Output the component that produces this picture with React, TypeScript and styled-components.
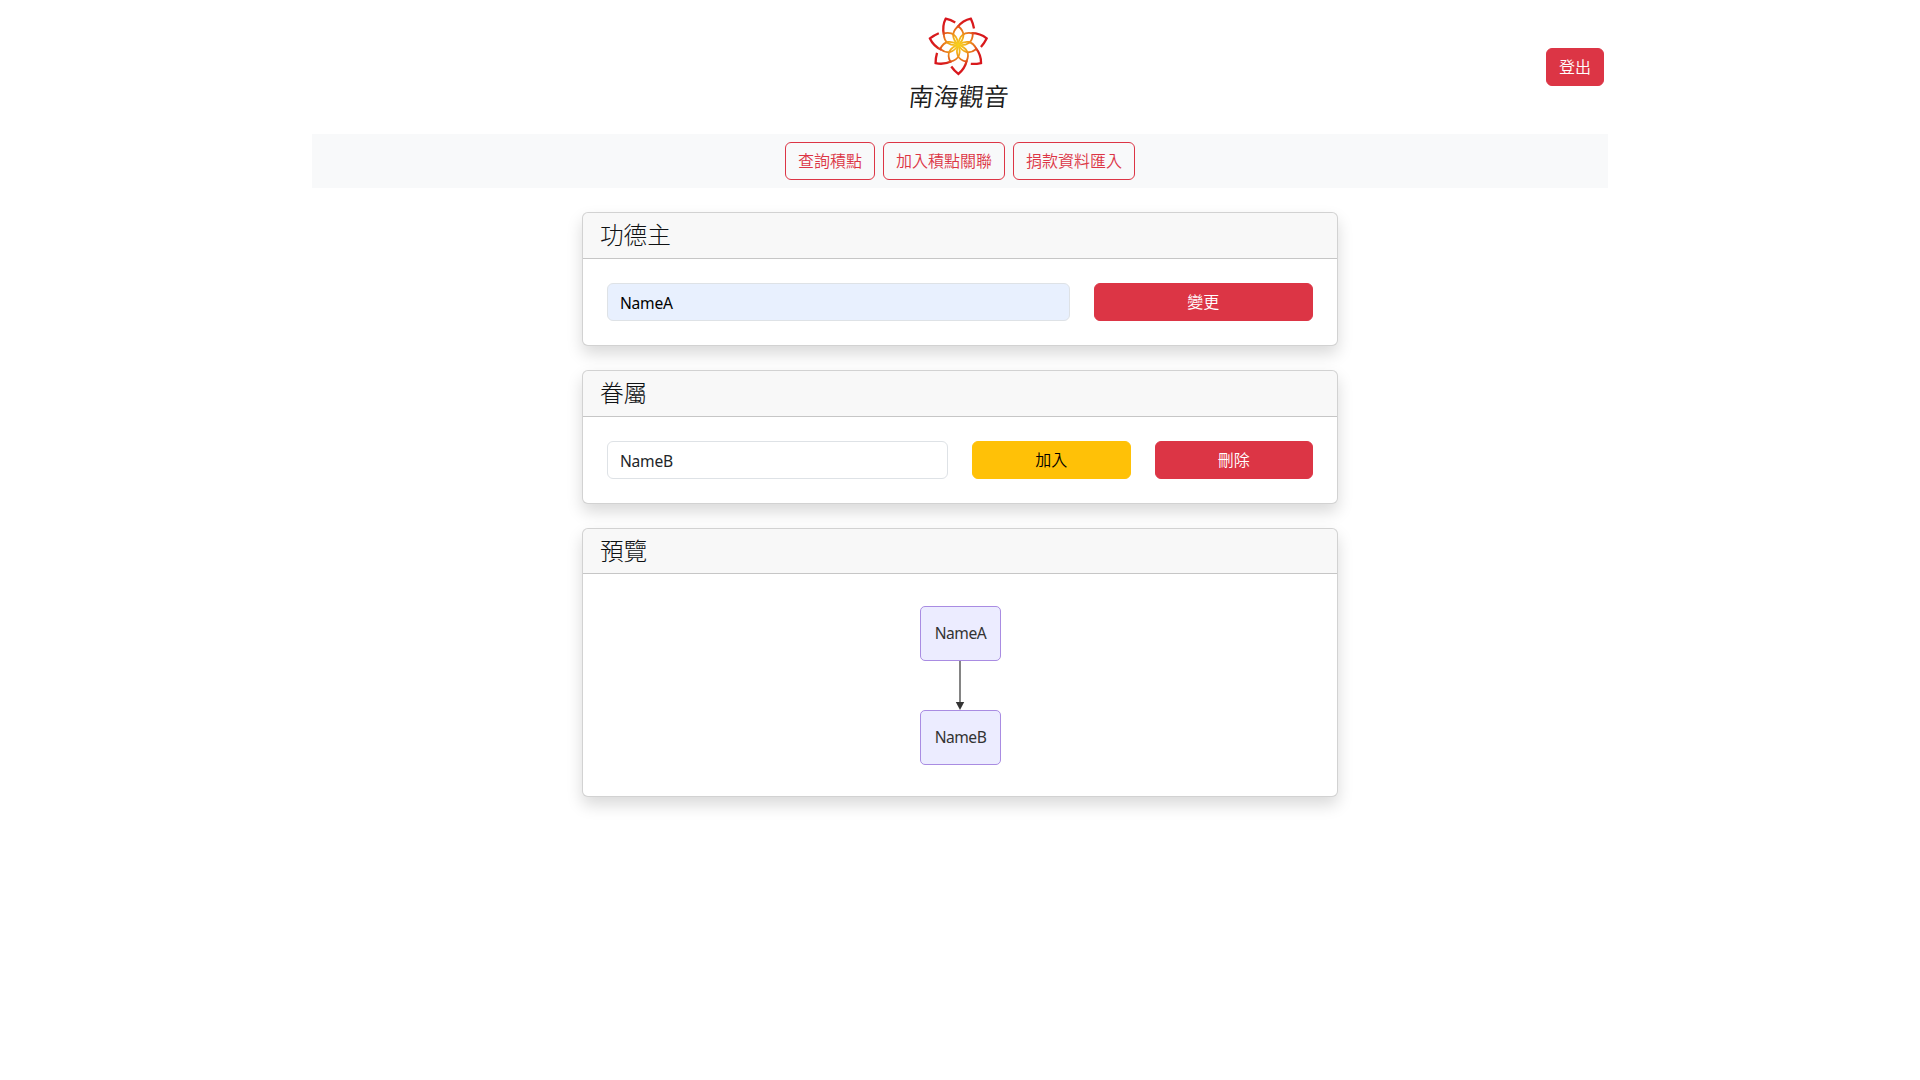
import React, { useState } from "react";
import styled, { createGlobalStyle, css } from "styled-components";

const GlobalStyle = createGlobalStyle`
  *, *::before, *::after { box-sizing: border-box; }
  body {
    margin: 0;
    background: #fff;
    color: #212529;
    font-family: "Noto Sans", "Noto Sans CJK TC", sans-serif;
    font-size: 16px;
    line-height: 1.5;
  }
`;

const Container = styled.div`
  width: 1296px;
  min-height: 100vh;
  margin: 0 auto;
`;

const Header = styled.header`
  display: grid;
  grid-template-columns: 1fr 140px 1fr;
  align-items: center;
  height: 134px;
  padding: 0 4px;
`;

const LogoSvg = styled.svg`
  display: block;
  grid-column: 2;
  width: 140px;
  height: 134px;
`;

const LogoText = styled.text`
  font-family: "Noto Sans CJK TC", sans-serif;
  font-size: 25px;
  font-weight: 350;
  fill: #1c1c1c;
`;

type Tone = "danger" | "warning" | "outline";

const tones = {
  danger: css`
    color: #fff;
    background: #dc3545;
    border-color: #dc3545;
  `,
  warning: css`
    color: #000;
    background: #ffc107;
    border-color: #ffc107;
  `,
  outline: css`
    color: #dc3545;
    background: transparent;
    border-color: #dc3545;
  `,
};

const Button = styled.button<{ $tone: Tone }>`
  height: 38px;
  padding: 5px 12px 7px;
  border: 1px solid;
  border-radius: 6px;
  font-family: "Noto Sans CJK TC", sans-serif;
  font-size: 16px;
  font-weight: 350;
  line-height: 24px;
  white-space: nowrap;
  cursor: pointer;
  ${({ $tone }) => tones[$tone]}
`;

const LogoutButton = styled(Button)`
  grid-column: 3;
  justify-self: end;
`;

const Nav = styled.nav`
  display: flex;
  justify-content: center;
  gap: 8px;
  padding: 8px;
  background: #f8f9fa;
`;

const Main = styled.main`
  display: flex;
  flex-direction: column;
  gap: 24px;
  width: 756px;
  margin: 24px auto 0;
`;

const Card = styled.section`
  border: 1px solid rgba(0, 0, 0, 0.175);
  border-radius: 6px;
  background: #fff;
  box-shadow: 0 8px 16px rgba(0, 0, 0, 0.15);
`;

const CardTitle = styled.h4`
  margin: 0;
  padding: 7px 16px 9px 17px;
  border-bottom: 1px solid rgba(0, 0, 0, 0.2);
  border-radius: 5px 5px 0 0;
  background: rgba(33, 37, 41, 0.03);
  font-family: "Noto Sans CJK TC", sans-serif;
  font-size: 23.6px;
  font-weight: 300;
  line-height: 28.8px;
  color: #101214;
`;

const FieldRow = styled.div<{ $columns: string }>`
  display: grid;
  grid-template-columns: ${({ $columns }) => $columns};
  gap: 24px;
  padding: 24px;
`;

const TextInput = styled.input<{ $autofilled?: boolean }>`
  width: 100%;
  min-width: 0;
  height: 38px;
  padding: 7px 12px 5px;
  border: 1px solid #dee2e6;
  border-radius: 6px;
  outline: none;
  background: ${({ $autofilled }) => ($autofilled ? "#e8f0fe" : "#fff")};
  color: ${({ $autofilled }) => ($autofilled ? "#000" : "#212529")};
  font: 400 15.6px/24px "Noto Sans", "Noto Sans CJK TC", sans-serif;
  letter-spacing: -0.25px;
`;

const Preview = styled.div`
  display: flex;
  flex-direction: column;
  align-items: center;
  padding: 31.4px 24px 31.6px;
`;

const Node = styled.div`
  display: flex;
  align-items: center;
  justify-content: center;
  width: 81px;
  height: 55px;
  padding: 0 0 1px 1px;
  border: 1px solid #a98ce2;
  border-radius: 5px;
  background: #ececff;
  color: #333;
  font: 400 15.6px/24px "Noto Sans", "Noto Sans CJK TC", sans-serif;
  letter-spacing: -0.5px;
`;

const Arrow = styled.svg`
  display: block;
  width: 10px;
  height: 49px;
`;

const petals = Array.from({ length: 7 }, (_, i) => (i * 360) / 7);

function Logo() {
  return (
    <LogoSvg viewBox="0 0 140 134" aria-label="南海觀音">
      <defs>
        <radialGradient id="bloom" gradientUnits="userSpaceOnUse" cx="0" cy="0" r="29">
          <stop offset="0" stopColor="#f8d21c" />
          <stop offset="0.3" stopColor="#f2ac1b" />
          <stop offset="0.58" stopColor="#e5661c" />
          <stop offset="0.74" stopColor="#d9201c" />
          <stop offset="1" stopColor="#d8141c" />
        </radialGradient>
      </defs>
      <g transform="translate(68.3 44.9)" fill="none" stroke="url(#bloom)">
        {petals.map((angle) => (
          <g key={angle} transform={`rotate(${angle})`}>
            <path strokeWidth="1.8" d="M0 0C-6.2-6-7.4-12.6 0-18.6C7.4-12.6 6.2-6 0 0Z" />
            <path strokeWidth="2.3" d="M-1-17.6C3-22.6 7.5-25.2 12.6-26.2C14-23.2 15.1-20 15.7-16.4" />
          </g>
        ))}
      </g>
      <LogoText x="20" y="106.5" textLength="100" transform="translate(9 0) skewX(-6)">
        南海觀音
      </LogoText>
    </LogoSvg>
  );
}

export default function App() {
  const [owner, setOwner] = useState("NameA");
  const [member, setMember] = useState("NameB");

  return (
    <>
      <GlobalStyle />
      <Container>
        <Header>
          <Logo />
          <LogoutButton $tone="danger">登出</LogoutButton>
        </Header>
        <Nav>
          <Button $tone="outline">查詢積點</Button>
          <Button $tone="outline">加入積點關聯</Button>
          <Button $tone="outline">捐款資料匯入</Button>
        </Nav>
        <Main>
          <Card>
            <CardTitle>功德主</CardTitle>
            <FieldRow $columns="462.67px 1fr">
              <TextInput $autofilled value={owner} onChange={(e) => setOwner(e.target.value)} />
              <Button $tone="danger">變更</Button>
            </FieldRow>
          </Card>
          <Card>
            <CardTitle>眷屬</CardTitle>
            <FieldRow $columns="341px 1fr 1fr">
              <TextInput value={member} onChange={(e) => setMember(e.target.value)} />
              <Button $tone="warning">加入</Button>
              <Button $tone="danger">刪除</Button>
            </FieldRow>
          </Card>
          <Card>
            <CardTitle>預覽</CardTitle>
            <Preview>
              <Node>NameA</Node>
              <Arrow viewBox="0 0 10 49">
                <path d="M5 0V42" stroke="#333" strokeWidth="1.2" />
                <path d="M0.8 41H9.2L5 49Z" fill="#333" />
              </Arrow>
              <Node>NameB</Node>
            </Preview>
          </Card>
        </Main>
      </Container>
    </>
  );
}
